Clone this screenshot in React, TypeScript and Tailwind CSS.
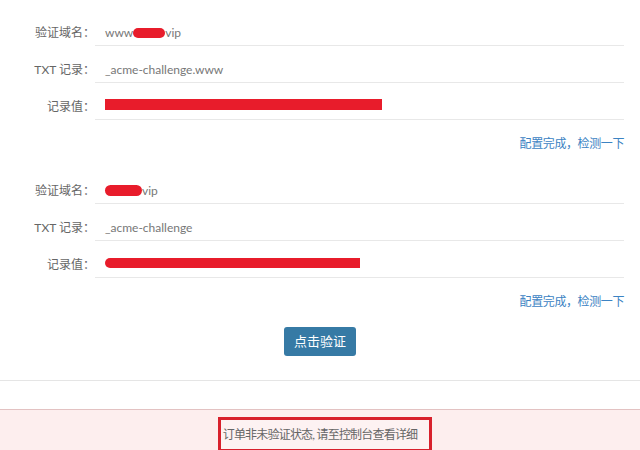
const font = 'Lato, "Noto Sans CJK SC", sans-serif';

function Redact({ className }: { className: string }) {
  return <span className={`inline-block bg-[#e81c2b] ${className}`} />;
}

function Row({ label, children }: { label: string; children: React.ReactNode }) {
  return (
    <div className="flex h-[37px]">
      <div className="w-[95px] shrink-0 pt-4 text-right text-[12px] leading-4 text-[#666]">{label}</div>
      <div className="mr-4 flex flex-1 items-start border-b border-[#e8e8e8] pl-[10px] pt-4 text-[12px] leading-4 text-[#777]">
        {children}
      </div>
    </div>
  );
}

function CheckLink() {
  return (
    <div className="flex h-[47px] items-center justify-end pr-4 text-[12px] leading-4 tracking-[-0.4px] text-[#3c83c3]">
      配置完成，检测一下
    </div>
  );
}

export default function App() {
  return (
    <div className="h-[450px] w-[640px] overflow-hidden bg-white" style={{ fontFamily: font }}>
      <div className="pt-[9px]">
        <Row label="验证域名：">
          <span>www</span>
          <Redact className="mt-[3px] h-[10px] w-[32px] rounded-[5px]" />
          <span>vip</span>
        </Row>
        <Row label="TXT 记录：">
          <span>_acme-challenge.www</span>
        </Row>
        <Row label="记录值：">
          <Redact className="mt-0 h-[11px] w-[277px]" />
        </Row>
        <CheckLink />

        <Row label="验证域名：">
          <Redact className="mt-[2px] h-[11px] w-[37px] rounded-[6px]" />
          <span>vip</span>
        </Row>
        <Row label="TXT 记录：">
          <span>_acme-challenge</span>
        </Row>
        <Row label="记录值：">
          <Redact className="mt-[1px] h-[10px] w-[255px] rounded-l-[5px]" />
        </Row>
        <CheckLink />

        <div className="mt-[2px] flex justify-center">
          <button className="h-[29px] w-[72px] rounded-[3px] bg-[#367aa5] text-[13px] text-white">点击验证</button>
        </div>

        <div className="mt-[24px] border-t border-[#e5e5e5]" />

        <div className="mt-[28px] h-[60px] border-t border-[#e3c2c2] bg-[#fdeeee]">
          <div className="flex justify-center pt-[7px]">
            <div className="ml-[10px] border-[3px] border-[#d8202c] bg-[#fdf2f2] pb-[6px] pl-[2px] pr-[12px] pt-[7px] text-[12px] leading-4 tracking-[-0.8px] text-[#666]">
              订单非未验证状态, 请至控制台查看详细
            </div>
          </div>
        </div>
      </div>
    </div>
  );
}
